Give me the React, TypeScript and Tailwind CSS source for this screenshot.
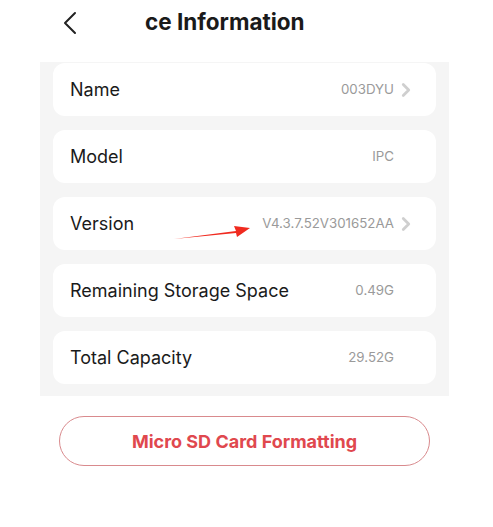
import { ChevronLeft, ChevronRight } from 'lucide-react';

const rows = [
  { label: 'Name', value: '003DYU', arrow: true },
  { label: 'Model', value: 'IPC', arrow: false },
  { label: 'Version', value: 'V4.3.7.52V301652AA', arrow: true },
  { label: 'Remaining Storage Space', value: '0.49G', arrow: false },
  { label: 'Total Capacity', value: '29.52G', arrow: false },
];

export default function App() {
  return (
    <div className="w-[493px] h-[527px] bg-white font-['Inter',sans-serif] relative">
      {/* header */}
      <div className="h-[62px] flex items-start">
        <ChevronLeft className="ml-[50px] mt-[3px] w-[40px] h-[40px] text-[#222]" strokeWidth={1.2} />
        <h1 className="ml-[55px] mt-[8px] text-[22.5px] leading-[28px] font-bold text-[#1a1a1a]">ce Information</h1>
      </div>

      <div className="mx-[40px] w-[409px] bg-[#f5f5f5] pt-[1px] pb-[12px] px-[13px] flex flex-col gap-[14px]">
        {rows.map((r) => (
          <div key={r.label} className="h-[53px] bg-white rounded-[12px] flex items-center pl-[17px] pr-[24px]">
            <span className="text-[18px] text-[#1a1a1a]">{r.label}</span>
            <span className="ml-auto text-[13.3px] text-[#9a9a9a]">{r.value}</span>
            <span className="w-[18px] flex justify-end">
              {r.arrow && <ChevronRight className="w-[22px] h-[22px] -mr-[5px] text-[#cfcfcf]" strokeWidth={3} />}
            </span>
          </div>
        ))}
      </div>

      <div className="pl-[59px] pt-[20px] pr-[63px]">
        <button className="w-full h-[50px] rounded-full border border-[#d98a8d] text-[#e0484e] text-[18px] font-bold">
          Micro SD Card Formatting
        </button>
      </div>

      {/* red annotation arrow */}
      <svg className="absolute left-[170px] top-[222px]" width="86" height="22" viewBox="0 0 86 22">
        <polygon points="4,17 66,9 64,4 80,6 67,15 66,11" fill="#f02a1f" />
      </svg>
    </div>
  );
}
